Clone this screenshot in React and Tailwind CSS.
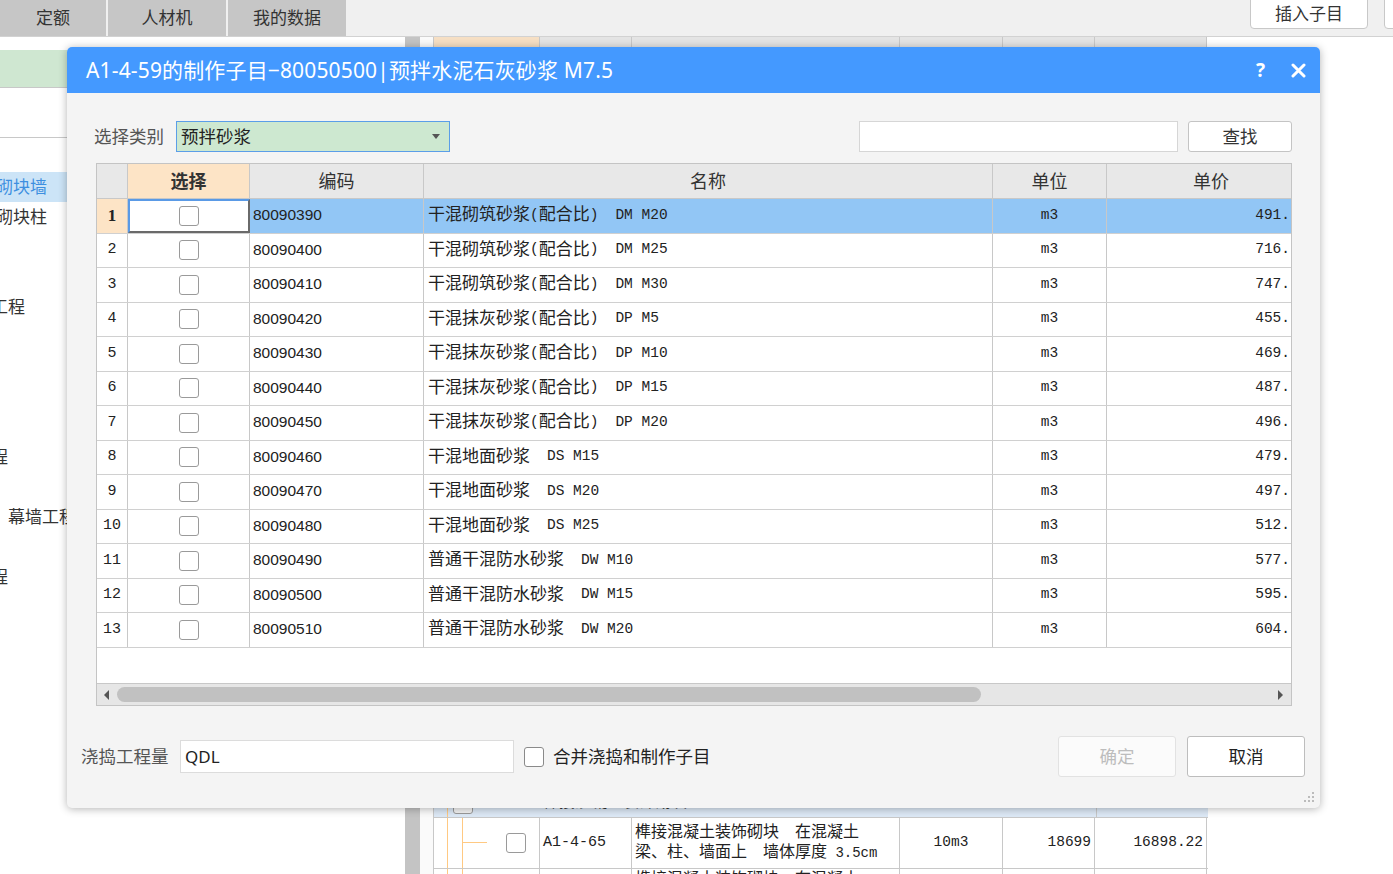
import React from 'react';

const rows = [
  ['80090390', '干混砌筑砂浆(配合比)　DM M20', '491.'],
  ['80090400', '干混砌筑砂浆(配合比)　DM M25', '716.'],
  ['80090410', '干混砌筑砂浆(配合比)　DM M30', '747.'],
  ['80090420', '干混抹灰砂浆(配合比)　DP M5', '455.'],
  ['80090430', '干混抹灰砂浆(配合比)　DP M10', '469.'],
  ['80090440', '干混抹灰砂浆(配合比)　DP M15', '487.'],
  ['80090450', '干混抹灰砂浆(配合比)　DP M20', '496.'],
  ['80090460', '干混地面砂浆　DS M15', '479.'],
  ['80090470', '干混地面砂浆　DS M20', '497.'],
  ['80090480', '干混地面砂浆　DS M25', '512.'],
  ['80090490', '普通干混防水砂浆　DW M10', '577.'],
  ['80090500', '普通干混防水砂浆　DW M15', '595.'],
  ['80090510', '普通干混防水砂浆　DW M20', '604.'],
];

const SANS = "font-['Noto_Sans','Noto_Sans_CJK_SC',sans-serif]";
const MONO = "font-['Liberation_Mono','Noto_Sans_CJK_SC',monospace]";
const CJK_RE = /[\u3000-\u303f\u4e00-\u9fff\uff00-\uffef]+|[^\u3000-\u303f\u4e00-\u9fff\uff00-\uffef]+/g;
const IS_CJK = /[\u3000-\u303f\u4e00-\u9fff\uff00-\uffef]/;

// CJK runs in one size, latin runs (song-style table font) in a narrower mono
const Mixed = ({ text, cjk, latin }) =>
  text.match(CJK_RE).map((s, i) => (
    <span key={i} className={IS_CJK.test(s) ? cjk : latin}>{s}</span>
  ));

const Box = ({ className = '' }) => (
  <span className={`block w-[20px] h-[20px] rounded-[3px] border border-[#9a9a9a] bg-white ${className}`} />
);

// tree rows on the left, 30px each, horizontally scrolled so text is cut
const treeRows = [
  null,
  { t: '砌块墙', ml: '-ml-[4px]', sel: true },
  { t: '砌块柱', ml: '-ml-[4px]' },
  null,
  null,
  { t: '工程', ml: '-ml-[9px]' },
  null, null, null, null,
  { t: '程', ml: '-ml-[9px]' },
  null,
  { t: '幕墙工程', ml: 'ml-[8px]' },
  null,
  { t: '程', ml: '-ml-[9px]' },
];

const Background = () => (
  <div className="flex flex-col w-full h-full">
    {/* top tabs */}
    <div className="flex h-[37px] shrink-0 bg-[#f0f0f0] border-b border-[#d2d2d2]">
      <div className="w-[106px] shrink-0 bg-[#c6c6c6] flex items-center justify-center text-[17px] text-[#333]">定额</div>
      <div className="w-[118px] shrink-0 ml-[2px] bg-[#c6c6c6] flex items-center justify-center text-[17px] text-[#333]">人材机</div>
      <div className="w-[118px] shrink-0 ml-[2px] bg-[#c6c6c6] flex items-center justify-center text-[17px] text-[#333]">我的数据</div>
      <div className="flex-1" />
      <div className="w-[118px] h-[30px] -mt-[1px] shrink-0 bg-white border border-[#c8c8c8] rounded-b-[4px] flex items-center justify-center text-[17px] text-[#333]">插入子目</div>
      <div className="w-[30px] h-[30px] -mt-[1px] ml-[16px] -mr-[21px] shrink-0 bg-white border border-[#c8c8c8] rounded-b-[4px]" />
    </div>

    <div className="flex flex-1 min-h-0 overflow-hidden">
      {/* left tree */}
      <div className="w-[405px] shrink-0 bg-white flex flex-col overflow-hidden">
        <div className="h-[13px] shrink-0" />
        <div className="h-[38px] shrink-0 bg-[#cfe7d1] border-b border-[#c8c8c8]" />
        <div className="h-[50px] shrink-0 border-b border-[#c8c8c8]" />
        <div className="pt-[4px] flex flex-col">
          {treeRows.map((r, i) => (
            <div key={i} className={`h-[30px] shrink-0 flex items-center text-[17px] whitespace-nowrap ${r && r.sel ? 'bg-[#cce4f7] text-[#3d8fe0]' : 'text-[#333]'}`}>
              {r && <span className={r.ml}>{r.t}</span>}
            </div>
          ))}
        </div>
      </div>
      <div className="w-[15px] shrink-0 bg-[#c4c4c4]" />
      <div className="w-[13px] shrink-0 bg-[#fafafa]" />

      {/* background table */}
      <div className="w-[775px] shrink-0 flex flex-col border-l border-[#c8c8c8] bg-white overflow-hidden">
        <div className="h-[30px] shrink-0 flex border-b border-[#c8c8c8]">
          <div className="w-[106px] bg-[#f6dfc4] border-r border-[#c8c8c8]" />
          <div className="w-[92px] bg-[#e4e4e4] border-r border-[#c8c8c8]" />
          <div className="w-[268px] bg-[#e4e4e4] border-r border-[#c8c8c8]" />
          <div className="w-[103px] bg-[#e4e4e4] border-r border-[#c8c8c8]" />
          <div className="w-[92px] bg-[#e4e4e4] border-r border-[#c8c8c8]" />
          <div className="w-[112px] bg-[#e4e4e4] border-r border-[#c8c8c8]" />
        </div>
        <div className="h-[717px] shrink-0" />
        {/* group row */}
        <div className="h-[34px] shrink-0 flex bg-[#dde9f6] border-b border-[#c8c8c8]">
          <div className="w-[106px] relative">
            <div className="absolute left-[13px] top-0 bottom-0 w-px bg-[#ffc982]" />
            <Box className="absolute left-[19px] top-[10px] !bg-[#f4f4f4]" />
          </div>
          <div className="flex-1 flex items-center pl-[3px] text-[16px] text-[#333]">榫接混凝土装饰砌块</div>
          <div className="w-[112px] border-l border-[#c8c8c8]" />
        </div>
        {/* data row */}
        <div className="h-[51px] shrink-0 flex border-b border-[#c8c8c8] text-[#222]">
          <div className="w-[106px] relative border-r border-[#c8c8c8]">
            <div className="absolute left-[13px] top-0 bottom-0 w-px bg-[#ffc982]" />
            <div className="absolute left-[28px] top-0 bottom-0 w-px bg-[#ffc982]" />
            <div className="absolute left-[28px] top-[24px] w-[25px] h-px bg-[#ffc982]" />
            <Box className="absolute left-[72px] top-[15px]" />
          </div>
          <div className={`w-[92px] border-r border-[#c8c8c8] flex items-center pl-[3px] text-[15px] ${MONO}`}>A1-4-65</div>
          <div className={`w-[268px] border-r border-[#c8c8c8] flex flex-col justify-center pl-[3px] leading-[20px] whitespace-pre ${MONO}`}>
            <span><Mixed text="榫接混凝土装饰砌块　在混凝土" cjk="text-[16px]" latin="text-[14.5px]" /></span>
            <span><Mixed text="梁、柱、墙面上　墙体厚度 3.5cm" cjk="text-[16px]" latin="text-[14px]" /></span>
          </div>
          <div className={`w-[103px] border-r border-[#c8c8c8] flex items-center justify-center text-[14.5px] ${MONO}`}>10m3</div>
          <div className={`w-[92px] border-r border-[#c8c8c8] flex items-center justify-end pr-[3px] text-[14.5px] ${MONO}`}>18699</div>
          <div className={`w-[112px] border-r border-[#c8c8c8] flex items-center justify-end pr-[3px] text-[14.5px] ${MONO}`}>16898.22</div>
        </div>
        <div className="h-[30px] shrink-0 flex text-[#222]">
          <div className="w-[106px] relative border-r border-[#c8c8c8]">
            <div className="absolute left-[13px] top-0 bottom-0 w-px bg-[#ffc982]" />
            <div className="absolute left-[28px] top-0 bottom-0 w-px bg-[#ffc982]" />
          </div>
          <div className="w-[92px] border-r border-[#c8c8c8]" />
          <div className={`w-[268px] border-r border-[#c8c8c8] pl-[3px] pt-[1px] text-[16px] leading-[20px] ${MONO}`}>榫接混凝土装饰砌块　在混凝土</div>
          <div className="w-[103px] border-r border-[#c8c8c8]" />
          <div className="w-[92px] border-r border-[#c8c8c8]" />
          <div className="w-[112px] border-r border-[#c8c8c8]" />
        </div>
      </div>
      <div className="flex-1 bg-white" />
    </div>
  </div>
);

const HeaderCell = ({ w, children, className = '' }) => (
  <div className={`${w} shrink-0 h-full border-r border-[#c8c8c8] flex items-center justify-center text-[18px] text-[#333] ${className}`}>
    {children}
  </div>
);

const Grid = () => (
  <div className="mt-[11px] h-[543px] shrink-0 flex flex-col border border-[#c4c4c4] bg-white overflow-hidden">
    <div className="h-[35px] shrink-0 flex border-b border-[#c8c8c8] bg-[#e8e8e8]">
      <HeaderCell w="w-[31px]" />
      <HeaderCell w="w-[122px]" className="bg-[#fde4c6] font-bold text-[#222]">选择</HeaderCell>
      <HeaderCell w="w-[174px]">编码</HeaderCell>
      <HeaderCell w="w-[569px]">名称</HeaderCell>
      <HeaderCell w="w-[114px]">单位</HeaderCell>
      <div className="flex-1 flex items-center justify-center pl-[24px] text-[18px] text-[#333]">单价</div>
    </div>
    {rows.map(([code, name, price], i) => {
      const sel = i === 0;
      const hl = sel ? 'bg-[#92c6f5]' : '';
      return (
        <div key={code} className="h-[34.5px] shrink-0 flex border-b border-[#d0d0d0] text-[#222]">
          <div className={`w-[31px] shrink-0 border-r border-[#c8c8c8] flex items-center justify-center ${sel ? "bg-[#fde4c6] font-bold font-['Liberation_Serif',serif] text-[17px]" : `${MONO} text-[15px]`}`}>
            {i + 1}
          </div>
          <div className={`w-[122px] shrink-0 flex items-center justify-center bg-white ${sel ? 'border-2 border-[#6a6a6a] border-l-[#5a9ae6] border-t-[#5a9ae6]' : 'border-r border-[#c8c8c8]'}`}>
            <Box />
          </div>
          <div className={`w-[174px] shrink-0 border-r border-[#c8c8c8] flex items-center pl-[3px] pb-[2px] text-[15.5px] font-['Liberation_Sans',sans-serif] ${hl}`}>{code}</div>
          <div className={`w-[569px] shrink-0 border-r border-[#c8c8c8] flex items-center pl-[4px] whitespace-pre ${MONO} ${hl}`}>
            <Mixed text={name} cjk="text-[17px]" latin="text-[14.5px]" />
          </div>
          <div className={`w-[114px] shrink-0 border-r border-[#c8c8c8] flex items-center justify-center text-[14.5px] ${MONO} ${hl}`}>m3</div>
          <div className={`flex-1 flex items-center justify-end pr-[1px] text-[14.5px] ${MONO} ${hl}`}>{price}</div>
        </div>
      );
    })}
    <div className="flex-1" />
    <div className="h-[22px] shrink-0 flex items-center bg-[#e6e6e6] border-t border-[#c8c8c8]">
      <svg width="20" height="12" viewBox="0 0 20 12" className="shrink-0">
        <path d="M7 6 L12 1 L12 11 Z" fill="#555" />
      </svg>
      <div className="w-[864px] h-[15px] rounded-full bg-[#c1c1c1]" />
      <div className="flex-1" />
      <svg width="20" height="12" viewBox="0 0 20 12" className="shrink-0">
        <path d="M7 1 L12 6 L7 11 Z" fill="#555" />
      </svg>
    </div>
  </div>
);

const Dialog = () => (
  <div className="absolute left-[67px] top-[47px] w-[1253px] h-[761px] bg-[#f4f4f4] rounded-[5px] shadow-[0_1px_8px_rgba(0,0,0,0.3)] flex flex-col">
    <div className="h-[46px] shrink-0 bg-[#4499ff] rounded-t-[5px] flex items-center pl-[19px] pr-[14px] text-white">
      <div className="flex-1 text-[21px] tracking-[0.15px] pt-[2px]">A1-4-59的制作子目−80050500|预拌水泥石灰砂浆 M7.5</div>
      <span className="text-[19px] font-bold mr-[26px]">?</span>
      <svg width="15" height="15" viewBox="0 0 15 15">
        <path d="M2 2 L13 13 M13 2 L2 13" stroke="white" strokeWidth="3" strokeLinecap="round" />
      </svg>
    </div>
    <div className="flex-1 flex flex-col pt-[28px] pl-[29px] pr-[28px] relative">
      <div className="h-[31px] shrink-0 flex items-center">
        <span className="-ml-[2px] w-[82px] text-[17.5px] text-[#555]">选择类别</span>
        <div className="w-[274px] h-full bg-[#cde8d0] border border-[#5b9ee8] flex items-center pl-[4px] pr-[9px] text-[17.5px] text-[#222]">
          <span className="flex-1">预拌砂浆</span>
          <svg width="8" height="5" viewBox="0 0 8 5"><path d="M0 0 L8 0 L4 5 Z" fill="#555" /></svg>
        </div>
        <div className="flex-1" />
        <div className="w-[319px] h-full bg-white border border-[#d6d6d6]" />
        <div className="ml-[10px] w-[104px] h-full bg-white border border-[#c4c4c4] rounded-[3px] flex items-center justify-center text-[17.5px] text-[#333]">查找</div>
      </div>

      <Grid />

      <div className="mt-[30px] -ml-[15px] -mr-[13px] h-[41px] shrink-0 flex items-center">
        <span className="w-[99px] text-[17.5px] text-[#555]">浇捣工程量</span>
        <div className="w-[334px] h-[33px] bg-white border border-[#dcdcdc] flex items-center pl-[4px] text-[17px] text-[#222]">QDL</div>
        <Box className="ml-[10px] !border-[#8a8a8a]" />
        <span className="ml-[9px] text-[17.5px] text-[#222]">合并浇捣和制作子目</span>
        <div className="flex-1" />
        <div className="w-[118px] h-[41px] bg-[#fbfbfb] border border-[#e2e2e2] rounded-[3px] flex items-center justify-center text-[17.5px] text-[#bdbdbd]">确定</div>
        <div className="ml-[11px] w-[118px] h-[41px] bg-white border border-[#bdbdbd] rounded-[3px] flex items-center justify-center text-[17.5px] text-[#222]">取消</div>
      </div>

      {/* resize grip */}
      <svg width="12" height="12" viewBox="0 0 12 12" className="absolute right-[5px] bottom-[5px]">
        <rect x="9" y="1" width="2" height="2" fill="#bbb" />
        <rect x="5" y="5" width="2" height="2" fill="#bbb" />
        <rect x="9" y="5" width="2" height="2" fill="#bbb" />
        <rect x="1" y="9" width="2" height="2" fill="#bbb" />
        <rect x="5" y="9" width="2" height="2" fill="#bbb" />
        <rect x="9" y="9" width="2" height="2" fill="#bbb" />
      </svg>
    </div>
  </div>
);

export default function App() {
  return (
    <div className={`relative w-[1393px] h-[874px] overflow-hidden bg-white ${SANS}`}>
      <Background />
      <Dialog />
    </div>
  );
}
